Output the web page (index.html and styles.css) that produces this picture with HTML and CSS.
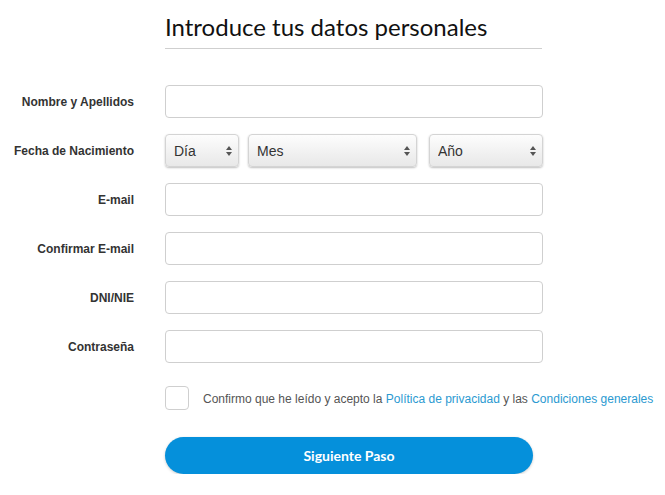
FILE: index.html
```html
<!DOCTYPE html>
<html lang="es">
<head>
<meta charset="utf-8">
<title>Introduce tus datos personales</title>
<link rel="stylesheet" href="styles.css">
</head>
<body>
<main class="page">
  <h1 class="title">Introduce tus datos personales</h1>
  <form class="form">
    <label class="label">Nombre y Apellidos</label>
    <input class="input" type="text">

    <label class="label">Fecha de Nacimiento</label>
    <div class="date">
      <span class="select select-day"><select><option>Día</option></select><svg class="arrows" viewBox="0 0 6 10" width="6" height="10"><path d="M3 0L6 4H0Z M3 10L0 6H6Z" fill="#555"/></svg></span>
      <span class="select select-month"><select><option>Mes</option></select><svg class="arrows" viewBox="0 0 6 10" width="6" height="10"><path d="M3 0L6 4H0Z M3 10L0 6H6Z" fill="#555"/></svg></span>
      <span class="select select-year"><select><option>Año</option></select><svg class="arrows" viewBox="0 0 6 10" width="6" height="10"><path d="M3 0L6 4H0Z M3 10L0 6H6Z" fill="#555"/></svg></span>
    </div>

    <label class="label">E-mail</label>
    <input class="input" type="text">

    <label class="label">Confirmar E-mail</label>
    <input class="input" type="text">

    <label class="label">DNI/NIE</label>
    <input class="input" type="text">

    <label class="label">Contraseña</label>
    <input class="input" type="password">

    <div class="terms">
      <span class="checkbox"></span>
      <span class="terms-text">Confirmo que he leído y acepto la <a href="#">Política de privacidad</a> y las <a href="#">Condiciones generales</a></span>
    </div>

    <button class="submit" type="button">Siguiente Paso</button>
  </form>
</main>
</body>
</html>
```
FILE: styles.css
```css
* { box-sizing: border-box; }
html, body { margin: 0; padding: 0; background: #fff; }
body { font-family: "Liberation Sans", Arial, sans-serif; color: #333; }

.page {
  width: 665px;
  padding-top: 11px;
}

.title {
  margin: 0 0 0 165px;
  width: 377px;
  font-family: Lato, sans-serif;
  font-weight: 400;
  font-size: 24px;
  line-height: 31px;
  color: #111;
  padding-bottom: 6px;
  border-bottom: 1px solid #cfcfcf;
}

.form {
  display: grid;
  grid-template-columns: 134px 378px;
  column-gap: 31px;
  row-gap: 16px;
  margin-top: 36px;
  align-items: center;
}

.label {
  text-align: right;
  font-size: 12px;
  font-weight: 700;
  color: #333;
}

.input {
  height: 33px;
  width: 378px;
  border: 1px solid #cfcfcf;
  border-radius: 4px;
  background: #fff;
  margin: 0;
}

.date {
  display: flex;
  height: 33px;
}

.select {
  position: relative;
  display: block;
  height: 33px;
}
.select-day { width: 74px; margin-right: 9px; }
.select-month { width: 169px; margin-right: 12px; }
.select-year { width: 114px; }

.select select {
  -webkit-appearance: none;
  appearance: none;
  width: 100%;
  height: 100%;
  margin: 0;
  padding: 0 0 0 8px;
  border: 1px solid #d4d4d4;
  border-radius: 4px;
  background: linear-gradient(#fdfdfd, #e8e8e8);
  box-shadow: 0 1px 2px rgba(0,0,0,0.25);
  font-family: "Liberation Sans", Arial, sans-serif;
  font-size: 14px;
  color: #333;
}

.arrows {
  position: absolute;
  right: 7px;
  top: 12px;
  pointer-events: none;
}

.terms {
  grid-column: 2 / 3;
  display: flex;
  align-items: center;
  margin-top: 7px;
  width: 500px;
}

.checkbox {
  flex: none;
  width: 24px;
  height: 24px;
  border: 1px solid #cfcfcf;
  border-radius: 4px;
  margin-right: 14px;
}

.terms-text {
  font-size: 12px;
  color: #555;
  white-space: nowrap;
  padding-top: 1px;
}
.terms-text a {
  color: #2b9ad1;
  text-decoration: none;
}

.submit {
  grid-column: 2 / 3;
  width: 368px;
  height: 37px;
  margin-top: 11px;
  border: none;
  border-radius: 19px;
  background: #0590db;
  box-shadow: 0 1px 3px rgba(0,0,0,0.2);
  color: #fff;
  font-family: Lato, sans-serif;
  font-weight: 700;
  font-size: 14px;
}
```
